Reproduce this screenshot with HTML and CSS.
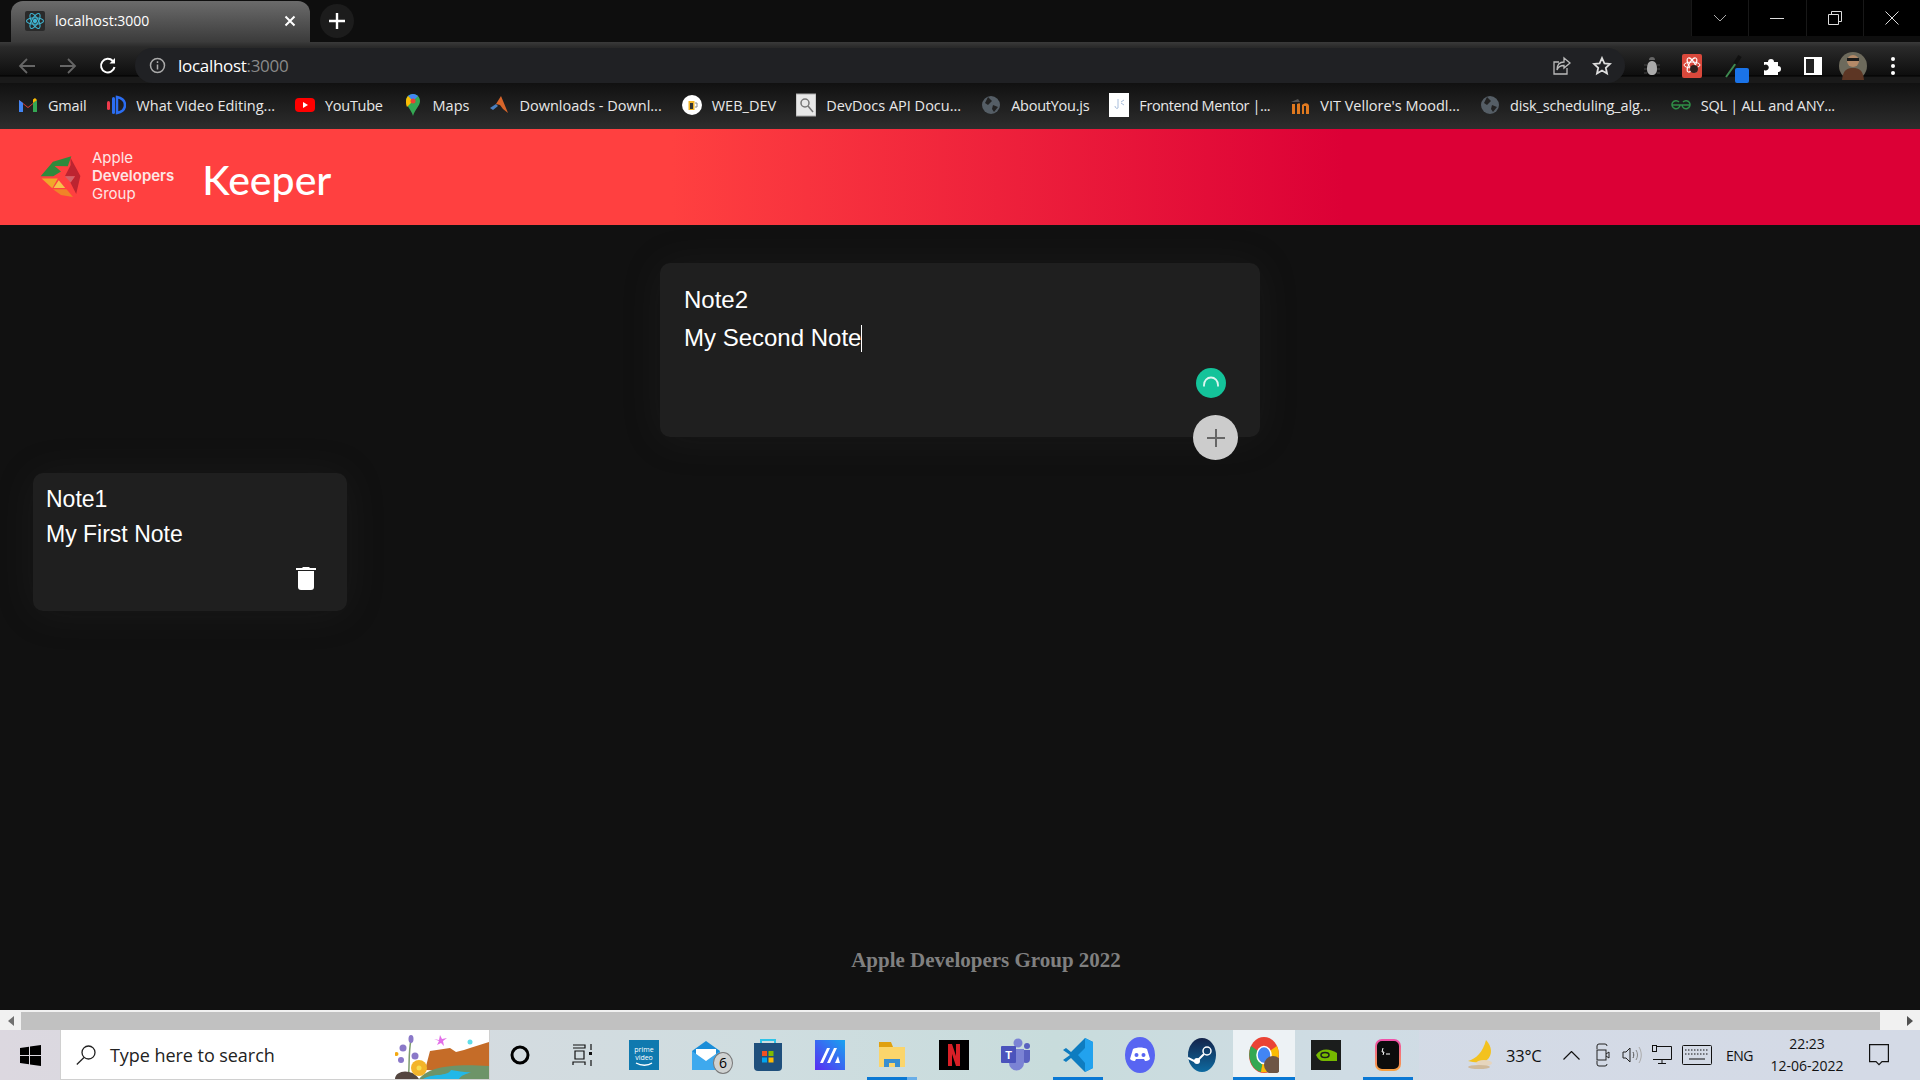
FILE: index.html
```html
<!DOCTYPE html>
<html lang="en">
<head>
<meta charset="utf-8">
<title>localhost:3000</title>
<link rel="stylesheet" href="styles.css">
</head>
<body>
<div class="screen">
  <div class="browser">
    <div class="tabstrip">
      <div class="tab">
        <span class="favicon">
          <svg width="20" height="20" viewBox="0 0 20 20" fill="none" stroke="#3fb6d3" stroke-width="1.1"><ellipse cx="10" cy="10" rx="8.5" ry="3.3"/><ellipse cx="10" cy="10" rx="8.5" ry="3.3" transform="rotate(60 10 10)"/><ellipse cx="10" cy="10" rx="8.5" ry="3.3" transform="rotate(120 10 10)"/><circle cx="10" cy="10" r="1.6" fill="#3fb6d3"/></svg>
        </span>
        <span class="tab-title">localhost:3000</span>
        <svg class="tab-close" width="12" height="12" viewBox="0 0 12 12" stroke="#fff" stroke-width="2"><path d="M1.5 1.5l9 9M10.500 1.500l-9 9"/></svg>
      </div>
      <div class="new-tab"><svg width="16" height="16" viewBox="0 0 16 16" stroke="#fff" stroke-width="2.400"><path d="M8 0v16M0 8h16"/></svg></div>
      <div class="win-controls">
        <span class="win-btn"><svg width="14" height="14" viewBox="0 0 14 14" fill="none" stroke="#aaa"><path d="M1 4l6 6 6-6"/></svg></span>
        <span class="win-btn"><svg width="14" height="14" viewBox="0 0 14 14" stroke="#ddd"><path d="M0 7.500h14"/></svg></span>
        <span class="win-btn"><svg width="14" height="14" viewBox="0 0 14 14" fill="none" stroke="#ddd"><path d="M.5 3.500h10v10H.5zM3.500 3.500V.5h10v10h-3"/></svg></span>
        <span class="win-btn"><svg width="14" height="14" viewBox="0 0 14 14" stroke="#ddd"><path d="M.5.5l13 13M13.500.5l-13 13"/></svg></span>
      </div>
    </div>
    <div class="toolbar">
      <div class="nav">
        <svg width="18" height="18" viewBox="0 0 18 18" fill="none" stroke="#666" stroke-width="1.800"><path d="M17 9H2M9 2L2 9l7 7"/></svg>
        <svg width="18" height="18" viewBox="0 0 18 18" fill="none" stroke="#666" stroke-width="1.800"><path d="M1 9h15M9 2l7 7-7 7"/></svg>
        <svg width="18" height="18" viewBox="0 0 18 18" fill="none" stroke="#fff" stroke-width="2"><path d="M15.500 10a6.800 6.800 0 1 1-1.700-6"/><path d="M16 1v5.500h-5.500" fill="#fff" stroke="none"/></svg>
      </div>
      <div class="omnibox">
        <svg width="17" height="17" viewBox="0 0 17 17" fill="none" stroke="#aaa" stroke-width="1.500"><circle cx="8.500" cy="8.500" r="7"/><path d="M8.500 7.500v5M8.500 4.200v1.800"/></svg>
        <span class="url">localhost<span class="url-port">:3000</span></span>
        <div class="omni-actions">
          <svg width="20" height="20" viewBox="0 0 20 20" fill="none" stroke="#bbb" stroke-width="1.300"><path d="M15 12v6H2V6h5M12 2l6 5-6 5V9.500c-4 0-6 1.500-7 4.500 0-5 2.500-8 7-8z"/></svg>
          <svg width="20" height="20" viewBox="0 0 20 20" fill="none" stroke="#ddd" stroke-width="1.800"><path d="M10 2l2.400 5.300 5.600.6-4.200 3.900 1.200 5.700-5-3-5 3 1.200-5.700L2 7.900l5.600-.6z"/></svg>
        </div>
      </div>
      <div class="extensions">
        <svg class="ext-bug" width="18" height="22" viewBox="0 0 18 22"><path d="M6 5a3 3 0 0 1 6 0z" fill="#666"/><path d="M9 6c4 0 5 4 5 8s-2 6-5 6-5-2-5-6 1-8 5-8z" fill="#aaa"/><path d="M1 10h3M14 10h3M1 14h3M14 14h3M1 18h3M14 18h3" stroke="#444"/></svg>
        <svg class="ext-react" width="20" height="24" viewBox="0 0 20 24"><rect width="20" height="24" rx="2" fill="#d9483b"/><g fill="none" stroke="#fff" stroke-width="1"><ellipse cx="10" cy="11" rx="8" ry="3"/><ellipse cx="10" cy="11" rx="8" ry="3" transform="rotate(60 10 11)"/><ellipse cx="10" cy="11" rx="8" ry="3" transform="rotate(120 10 11)"/></g><circle cx="12" cy="15" r="4" fill="#30201c"/></svg>
        <span class="ext-dropper">
          <svg width="20" height="24" viewBox="0 0 20 24" fill="none"><path d="M2 23L12 9" stroke="#3e8a50" stroke-width="2"/><path d="M11 10l5-8" stroke="#111" stroke-width="4"/></svg>
          <span class="ext-badge"></span>
        </span>
        <svg class="ext-puzzle" width="19" height="19" viewBox="0 0 19 19" fill="#fff"><path d="M1 6h4a3 3 0 1 1 6 0h4v4a3 3 0 1 1 0 6v3H1v-5a3 3 0 1 0 0-5z"/></svg>
        <svg class="ext-side" width="18" height="18" viewBox="0 0 18 18"><path fill="#fff" d="M0 0h18v18H0z"/><path fill="#222" d="M2 2h8v14H2z"/></svg>
        <svg class="ext-avatar" width="28" height="28" viewBox="0 0 28 28"><circle cx="14" cy="14" r="14" fill="#6d6a5c"/><path d="M3 28c1-10 5-12 11-12s10 2 11 12z" fill="#5d3624"/><circle cx="14" cy="9" r="6" fill="#b48a68"/><path d="M8 6h12v3H8z" fill="#1a1a1a"/></svg>
        <svg class="ext-menu" width="6" height="20" viewBox="0 0 6 20" fill="#fff"><circle cx="3" cy="3" r="2"/><circle cx="3" cy="10" r="2"/><circle cx="3" cy="17" r="2"/></svg>
      </div>
    </div>
    <div class="bookmarks">
      <span class="bm bm-s1"><svg width="20" height="16" viewBox="0 0 20 16"><path d="M1 15V3l9 7 9-7v12h-4V7l-5 4-5-4v8z" fill="#ea4335"/><path d="M1 15V3l4 3v9z" fill="#4285f4"/><path d="M19 15V3l-4 3v9z" fill="#34a853"/><path d="M15 6l4-3v0l-2-2-2 1.500z" fill="#fbbc04"/></svg>Gmail</span>
      <span class="bm"><svg width="20" height="20" viewBox="0 0 20 20"><rect x="1" y="6" width="3" height="9" rx="1.500" fill="#ef3b4c"/><rect x="6" y="2" width="3" height="17" rx="1.500" fill="#2b6df2"/><path d="M11 2c5 1 8 4 8 8s-3 7-8 8z" fill="none" stroke="#2b6df2" stroke-width="2.500"/></svg>What Video Editing...</span>
      <span class="bm bm-s2"><svg width="20" height="20" viewBox="0 0 20 20"><rect y="3" width="20" height="14" rx="4" fill="#f00"/><path d="M8 7l5 3-5 3z" fill="#fff"/></svg>YouTube</span>
      <span class="bm"><svg width="20" height="24" viewBox="0 0 20 24"><path d="M10 1c4 0 7 3 7 7 0 5-5 8-7 15-2-7-7-10-7-15 0-4 3-7 7-7z" fill="#34a853"/><path d="M5 3c1-1 3-2 5-2 2 0 3.500 1 5 2l-5 5z" fill="#4285f4"/><path d="M3 8c0-2 1-4 2-5l5 5-6 6c-1-2-1-4-1-6z" fill="#fbbc04"/><circle cx="10" cy="8" r="2.500" fill="#ea4335"/></svg>Maps</span>
      <span class="bm"><svg width="20" height="20" viewBox="0 0 20 20"><path d="M1 13l6-4 2 2-5 4z" fill="#4a80c0"/><path d="M7 9l5-8 7 17-5-4-3-4z" fill="#d8652a"/></svg>Downloads - Downl...</span>
      <span class="bm"><svg width="20" height="20" viewBox="0 0 20 20"><circle cx="10" cy="10" r="10" fill="#fff"/><rect x="6.500" y="6" width="6" height="9" fill="#f0b429"/><rect x="8" y="8" width="3" height="6" fill="#333"/><path d="M13 8h2v4h-2" fill="none" stroke="#888"/></svg>WEB_DEV</span>
      <span class="bm"><svg width="20" height="24" viewBox="0 0 20 24"><rect y="1" width="20" height="22" fill="#e8e8e8" stroke="#aaa"/><circle cx="9" cy="10" r="4" fill="none" stroke="#777" stroke-width="1.500"/><path d="M12 13l5 6" stroke="#777" stroke-width="1.500"/></svg>DevDocs API Docu...</span>
      <span class="bm bm-s3"><svg width="20" height="20" viewBox="0 0 20 20"><circle cx="10" cy="10" r="9" fill="#555e66"/><path d="M7 2l4 4-4 4-3-2zM12 10l5 2-4 5-2-3z" fill="#222"/></svg>AboutYou.js</span>
      <span class="bm bm-s4"><svg width="20" height="24" viewBox="0 0 20 24"><rect width="20" height="24" fill="#fff"/><path d="M9 6v9c-1 1-3 0-3-2" fill="none" stroke="#a8bedc"/><path d="M12 9l3-2M12 10l3 2" stroke="#a8bedc"/></svg>Frontend Mentor |...</span>
      <span class="bm"><svg width="20" height="18" viewBox="0 0 20 18"><path d="M1 6l7-3 2 3z" fill="#555"/><path d="M2 18V8h3v10zM7 18V8c2-1 3-1 3 0v10zM12 18V9c3-3 7-2 7 1v8h-3v-8h-2v8z" fill="#e0791f"/></svg>VIT Vellore's Moodl...</span>
      <span class="bm bm-s5"><svg width="20" height="20" viewBox="0 0 20 20"><circle cx="10" cy="10" r="9" fill="#555e66"/><path d="M7 2l4 4-4 4-3-2zM12 10l5 2-4 5-2-3z" fill="#222"/></svg>disk_scheduling_alg...</span>
      <span class="bm bm-s6"><svg width="20" height="12" viewBox="0 0 20 12" fill="none" stroke="#2f8d46" stroke-width="1.500"><path d="M1 6h18M9 6a4 4 0 1 1-1-3M11 6a4 4 0 1 0 1-3"/></svg>SQL | ALL and ANY...</span>
    </div>
  </div>

  <div class="page">
    <header class="app-header">
      <svg class="logo" width="42" height="44" viewBox="120 85 130 134">
        <path d="M122 150l38-45 57-17-11 31-41-1 20 17-24 15z" fill="#2f8a3c"/>
        <path d="M214 92l31 57-13 56-18-36 15-19h-32l18-35z" fill="#bd2430"/>
        <path d="M197 150h31l-13 19z" fill="#d0636b"/>
        <path d="M125 157h50l-17 30z" fill="#f0a82a"/>
        <path d="M178 162l20 24h-36z" fill="#f6c24b"/>
        <path d="M160 190h42l20 24-37-6z" fill="#f08428"/>
      </svg>
      <div class="org"><span>Apple</span><strong>Developers</strong><span>Group</span></div>
      <h1 class="brand">Keeper</h1>
    </header>

    <main class="content">
      <form class="composer">
        <div class="composer-line">Note2</div>
        <div class="composer-line">My Second Note<span class="caret"></span></div>
        <span class="spinner"><svg width="16" height="16" viewBox="0 0 16 16" fill="none" stroke="#fff" stroke-opacity=".85" stroke-width="1.800"><path d="M1 11.500V10A7 7.500 0 0 1 15 10v1.500"/></svg></span>
        <span class="fab"><svg width="18" height="18" viewBox="0 0 18 18" stroke="#666" stroke-width="2"><path d="M9 0v18M0 9h18"/></svg></span>
      </form>
      <section class="note">
        <div class="note-line">Note1</div>
        <div class="note-line">My First Note</div>
        <svg class="trash" width="20" height="24" viewBox="0 0 20 24" fill="#fff"><path d="M7 1h6l1 1h6v2H0V2h6z"/><path d="M2 5h16v16a3 3 0 0 1-3 3H5a3 3 0 0 1-3-3z"/></svg>
      </section>
      <footer class="footer">Apple Developers Group 2022</footer>
    </main>
  </div>

  <div class="hscroll">
    <span class="sb-btn"><span class="sb-left"></span></span>
    <span class="sb-thumb"></span>
    <span class="sb-rest"></span>
    <span class="sb-btn"><span class="sb-right"></span></span>
  </div>

  <div class="taskbar">
    <div class="start"><svg width="21" height="21" viewBox="0 0 21 21" fill="#000"><path d="M0 3l9-1.300V10H0zM10 1.500L21 0v10H10zM0 11h9v8.300L0 18zM10 11h11v10l-11-1.500z"/></svg></div>
    <div class="search">
      <svg width="20" height="20" viewBox="0 0 20 20" fill="none" stroke="#222" stroke-width="1.300"><circle cx="12.500" cy="7.500" r="6.500"/><path d="M8 12.500L.8 19.500"/></svg>
      <span class="search-text">Type here to search</span>
      <svg class="search-art" width="94" height="49" viewBox="0 0 94 49">
        <path d="M30 40l5-19 20-3 6 4 8-2 6-2 19-6v30z" fill="#c56c28"/>
        <path d="M24 49c8-11 30-16 70-13v13z" fill="#6d9468"/>
        <path d="M28 49c10-6 24-2 28-9 8 1 16 3 20 2-4 2-10 3-12 7z" fill="#22b8e8"/>
        <path d="M13 49c2-10 0-25 3-39" fill="none" stroke="#7c9c6c" stroke-width="1.500"/>
        <ellipse cx="16" cy="9" rx="2.500" ry="4" fill="#8a78c8"/><circle cx="8" cy="18" r="3.500" fill="#8a78c8"/><circle cx="20" cy="26" r="3.500" fill="#8a78c8"/><circle cx="6" cy="30" r="3" fill="#8a78c8"/><circle cx="1.500" cy="24" r="2" fill="#f4a810"/>
        <path d="M0 49c0-6 8-9 14-7 5 1 8 4 10 7z" fill="#544640"/>
        <circle cx="24" cy="38" r="8" fill="#f3b42a"/><circle cx="24" cy="38" r="2.500" fill="#f8dc50"/>
        <path d="M39 9l5 1 1-5 2 4 5-1-4 3 1 5-3-3-4 2 2-4z" fill="#e26ee8"/><circle cx="75" cy="12" r="2.500" fill="#60dde8"/>
      </svg>
    </div>
    <span class="slot slot-cortana"><svg width="20" height="20" viewBox="0 0 20 20" fill="none" stroke="#000" stroke-width="3"><circle cx="10" cy="10" r="8"/></svg></span>
    <span class="slot slot-tasks"><svg width="20" height="22" viewBox="0 0 20 22" fill="none" stroke="#111" stroke-width="1.200"><path d="M1 1h12v3H1M3 7h9v8H3zM1 21v-3h12v3M19 0v6M19 16v6"/><rect x="17" y="8" width="3" height="3" fill="#111" stroke="none"/></svg></span>
    <span class="slot"><svg width="30" height="30" viewBox="0 0 30 30"><rect width="30" height="30" fill="#0f79af"/><text x="15" y="12" class="svg-label">prime</text><text x="15" y="20" class="svg-label">video</text><path d="M7 23c5 3 12 3 16 0" fill="none" stroke="#fff" stroke-width="1.300"/></svg></span>
    <span class="slot"><svg width="30" height="30" viewBox="0 0 30 30"><path d="M1 11L15 1l14 10v19H1z" fill="#1a8dd8"/><path d="M5 9h20v6l-10 7-10-7z" fill="#fff"/><path d="M1 11l14 10 14-10v19H1z" fill="#3ea9ee"/></svg><span class="badge-count">6</span></span>
    <span class="slot"><svg width="30" height="34" viewBox="0 0 30 34"><path d="M8 6V2h14v4" fill="none" stroke="#2dc3e8" stroke-width="2"/><path d="M1 5h28v24a4 4 0 0 1-4 4H5a4 4 0 0 1-4-4z" fill="#1f4f7c"/><rect x="9" y="13" width="5" height="5" fill="#f25022"/><rect x="15.500" y="13" width="5" height="5" fill="#7fba00"/><rect x="9" y="19.500" width="5" height="5" fill="#00a4ef"/><rect x="15.500" y="19.500" width="5" height="5" fill="#ffb900"/></svg></span>
    <span class="slot"><svg width="30" height="30" viewBox="0 0 30 30"><defs><linearGradient id="ms" x1="0" y1="1" x2="1" y2="0"><stop offset="0" stop-color="#5a2cf2"/><stop offset="1" stop-color="#18a4f0"/></linearGradient></defs><rect width="30" height="30" fill="url(#ms)"/><path d="M5 23L12 8h3L8 23zM12 23l7-15h3l-7 15zM20 23l3-7 2 7z" fill="#fff"/></svg></span>
    <span class="slot slot-open"><svg width="28" height="30" viewBox="0 0 28 30"><path d="M1 2h12l2 5H1z" fill="#e0a010"/><path d="M1 7h26v20H1z" fill="#fbd56b"/><path d="M6 19h16v8h-5v-4h-6v4H6z" fill="#3a8fd0"/></svg><span class="tail"></span></span>
    <span class="slot"><svg width="30" height="30" viewBox="0 0 30 30"><rect width="30" height="30" fill="#000"/><path d="M9 4h4l4 12V4h4v22h-4l-4-12v12H9z" fill="#d81f26"/></svg></span>
    <span class="slot"><svg width="30" height="34" viewBox="0 0 30 34"><circle cx="17" cy="5" r="4.500" fill="#7b83d4"/><circle cx="26" cy="8" r="3" fill="#5a62c0"/><path d="M21 12h8v9a4 4 0 0 1-8 0z" fill="#5a62c0"/><path d="M8 11h15v14a7 7 0 0 1-15 0z" fill="#7b83d4"/><rect y="8" width="15" height="17" rx="1" fill="#4b53bc"/><text x="7.500" y="21" class="svg-t">T</text></svg></span>
    <span class="slot slot-open"><svg width="31" height="36" viewBox="0 0 31 36"><path d="M22 1l8 4v26l-8 4L8 21l-5 4-3-2 7-5-7-5 3-2 5 4z" fill="#0e7cc0"/><path d="M22 1l8 4v26l-8 4 0-9-7-8 7-7z" fill="#22a2ee"/></svg></span>
    <span class="slot"><svg width="30" height="36" viewBox="0 0 30 36"><ellipse cx="15" cy="18" rx="15" ry="18" fill="#5865f2"/><path d="M8 12c4-2 10-2 14 0l3 10c-2 2-4 2-5 2l-1-2H11l-1 2c-1 0-3 0-5-2z" fill="#fff"/><circle cx="11.500" cy="18" r="2" fill="#5865f2"/><circle cx="18.500" cy="18" r="2" fill="#5865f2"/></svg></span>
    <span class="slot"><svg width="28" height="34" viewBox="0 0 28 34"><defs><linearGradient id="st" x1="0" y1="0" x2="0" y2="1"><stop offset="0" stop-color="#14234a"/><stop offset="1" stop-color="#0d6aa0"/></linearGradient></defs><ellipse cx="14" cy="17" rx="14" ry="17" fill="url(#st)"/><circle cx="19" cy="13" r="4" fill="none" stroke="#fff" stroke-width="1.500"/><path d="M0 20l8 4 8-8" fill="none" stroke="#fff" stroke-width="2"/><circle cx="9" cy="23" r="3" fill="#fff"/></svg></span>
    <span class="slot slot-active"><svg width="30" height="36" viewBox="0 0 30 36"><ellipse cx="15" cy="18" rx="15" ry="18" fill="#ea4335"/><path d="M15 18L2 9a15 18 0 0 0 10 26z" fill="#34a853"/><path d="M15 18l13-9a15 18 0 0 1-16 26z" fill="#fbbc04"/><ellipse cx="15" cy="18" rx="7" ry="8.500" fill="#4285f4" stroke="#fff" stroke-width="1.500"/><circle cx="24" cy="28" r="9" fill="#6e5545"/></svg></span>
    <span class="slot"><svg width="30" height="30" viewBox="0 0 30 30"><rect width="30" height="30" fill="#1b1d1c"/><path d="M5 15c5-7 13-7 21-2v8H12c-3 0-5-2-7-6z" fill="#76b900"/><ellipse cx="14" cy="15" rx="4" ry="2.500" fill="none" stroke="#1b1d1c" stroke-width="1.500"/></svg></span>
    <span class="slot slot-open"><svg width="26" height="32" viewBox="0 0 26 32"><defs><linearGradient id="tm" x1="0" y1="0" x2="0" y2="1"><stop offset="0" stop-color="#f050a8"/><stop offset="1" stop-color="#f8a040"/></linearGradient></defs><rect x="1" y="1" width="24" height="30" rx="6" fill="#0c0c0c" stroke="url(#tm)" stroke-width="2"/><path d="M8 9l-1 4h2l-1 3" stroke="#fff" fill="none"/><path d="M11 15h4" stroke="#fff"/></svg></span>

    <div class="tray">
      <svg class="tray-moon" width="28" height="32" viewBox="0 0 28 32"><path d="M19 1c6 6 7 15 1 20-4 3-12 3-19 1 8-2 15-9 18-21z" fill="#f3c21f"/><ellipse cx="17" cy="24" rx="8" ry="3" fill="#e6d5bd"/><ellipse cx="12" cy="28" rx="11" ry="2" fill="#d0ba9b"/></svg>
      <span class="tray-temp">33°C</span>
      <svg class="tray-caret" width="17" height="9" viewBox="0 0 17 9" fill="none" stroke="#111" stroke-width="1.200"><path d="M.5 8.500l8-8 8 8"/></svg>
      <svg class="tray-meet" width="14" height="24" viewBox="0 0 14 24" fill="none" stroke="#222"><path d="M1 6V3a2 2 0 0 1 2-2h6a2 2 0 0 1 2 2M1 18v3a2 2 0 0 0 2 2h6a2 2 0 0 0 2-2"/><rect x="1" y="7" width="9" height="10"/><path d="M10 11l3-2v6l-3-2"/></svg>
      <svg class="tray-sound" width="20" height="20" viewBox="0 0 20 20" fill="none" stroke="#222"><path d="M1 7h3l4-4v14l-4-4H1z"/><path d="M11 7c1 2 1 4 0 6" stroke="#555"/><path d="M14 5c2 3 2 7 0 10" stroke="#888"/><path d="M17 2c3 5 3 11 0 16" stroke="#aaa"/></svg>
      <svg class="tray-net" width="20" height="20" viewBox="0 0 20 20" fill="none" stroke="#111"><path d="M4 1.500h15.500v13H1M10 15v3M6 18.500h8"/><rect x=".5" y=".5" width="4" height="6" fill="#d5dbe6"/></svg>
      <svg class="tray-keys" width="30" height="20" viewBox="0 0 30 20" fill="none" stroke="#111"><rect x=".5" y=".5" width="29" height="19" rx="1"/><path d="M3 5h24M3 9h24" stroke-dasharray="1.500 1.500"/><path d="M7 14h16"/></svg>
      <span class="tray-lang">ENG</span>
      <div class="clock"><span>22:23</span><span>12-06-2022</span></div>
      <svg class="tray-note" width="20" height="22" viewBox="0 0 20 22" fill="none" stroke="#111" stroke-width="1.200"><path d="M.6.6h18.800v17H13l-3 3-3-3H.6z"/></svg>
    </div>
  </div>
</div>
</body>
</html>
```

FILE: styles.css
```css
* { box-sizing: border-box; }
html, body { margin: 0; padding: 0; }
body { background: #111; overflow: hidden; }
svg { display: block; flex: none; }

.screen { width: 1920px; height: 1080px; display: flex; flex-direction: column; overflow: hidden; }

/* browser */
.browser { flex: none; font-family: "Open Sans", "Noto Sans", sans-serif; color: #fff; }
.tabstrip { height: 42px; display: flex; align-items: flex-start; padding: 1px 0 0 11px; background: #0e0e0e; position: relative; }
.tab { width: 299px; height: 41px; border-radius: 12px 12px 0 0; background: linear-gradient(#6b6b6b, #3b3b3b); display: flex; align-items: center; padding: 0 14px 2px; }
.favicon { width: 20px; height: 20px; background: #2a2a2a; border-radius: 2px; }
.tab-title { margin-left: 10px; font-size: 14px; flex: 1; }
.new-tab { width: 34px; height: 34px; margin: 3px 0 0 10px; border-radius: 50%; background: #1c1c1c; display: flex; align-items: center; justify-content: center; }
.win-controls { position: absolute; top: 0; right: 0; height: 36px; width: 229px; background: #000; display: flex; }
.win-btn { flex: 1; display: flex; align-items: center; justify-content: center; border-left: 1px solid #181818; }

.toolbar { height: 41px; display: flex; background: linear-gradient(#3a3a3a 0, #2a2a2a 5px, #0e0e0e 33px, #000 34px, #1a1a1a 35px, #1a1a1a 41px); position: relative; padding-top: 6px; }
.nav { width: 135px; display: flex; align-items: center; gap: 22.500px; padding: 0 0 0 18px; height: 35px; }
.omnibox { width: 1490px; height: 35px; border-radius: 18px; background: #202124; display: flex; align-items: center; padding-left: 14px; }
.url { margin-left: 12px; font-size: 17px; letter-spacing: -.3px; }
.url-port { color: #8a8a8a; }
.omni-actions { margin-left: auto; display: flex; align-items: center; gap: 20px; padding-right: 13px; }
.extensions { flex: 1; position: relative; display: flex; align-items: center; height: 35px; padding-left: 18px; }
.ext-react { margin-left: 21px; }
.ext-dropper { position: relative; margin-left: 22px; width: 20px; height: 24px; }
.ext-badge { position: absolute; left: 11px; top: 14px; width: 14px; height: 15px; border-radius: 2px; background: #1a73e8; }
.ext-puzzle { margin-left: 19px; }
.ext-side { margin-left: 22px; }
.ext-avatar { margin-left: 17px; }
.ext-menu { margin-left: 23px; }

.bookmarks { height: 46px; display: flex; align-items: center; padding: 0 0 2px 18px; gap: 20px; background: linear-gradient(#111, #2d2d2d); font-size: 14.500px; color: #e8e8e8; white-space: nowrap; }
.bm { display: flex; align-items: center; gap: 0; }
.bm svg { margin-right: 10px; }
.bm-s1 { letter-spacing: -.2px; }
.bm-s2 { letter-spacing: -.3px; }
.bm-s3 { letter-spacing: -.25px; }
.bm-s4 { letter-spacing: -.4px; }
.bm-s5 { letter-spacing: -.12px; }
.bm-s6 { letter-spacing: -.28px; }

/* app */
.page { flex: 1; min-height: 0; display: flex; flex-direction: column; background: #111; font-family: "Liberation Sans", Arial, sans-serif; color: #fff; }
.app-header { height: 96px; flex: none; display: flex; align-items: center; padding-left: 40px; background: linear-gradient(90deg, #ff4040 0, #ff4040 35%, #dc0036 70%, #dc0036 100%); }
.org { margin: -2px 0 0 10px; display: flex; flex-direction: column; font-family: Inter, sans-serif; font-size: 15px; line-height: 18px; color: #fde6e6; }
.org strong { font-weight: 600; }
.brand { margin: 5px 0 0 28px; font-family: Lato, sans-serif; font-weight: 500; font-size: 41px; line-height: 1; color: #fff; }

.content { flex: 1; display: flex; flex-direction: column; padding-top: 38px; }
.composer { position: relative; width: 600px; height: 174px; margin: 0 auto; padding: 18px 24px 0; border-radius: 10px; background: #1f1f1f; box-shadow: 0 2px 40px rgba(70, 70, 70, .14); }
.composer-line { font-size: 24px; line-height: 38px; }
.caret { display: inline-block; width: 1px; height: 27px; background: #fff; vertical-align: -6px; }
.spinner { position: absolute; right: 34px; top: 105px; width: 30px; height: 30px; border-radius: 50%; background: #14c39a; display: flex; align-items: center; justify-content: center; }
.fab { position: absolute; right: 22px; bottom: -23px; width: 45px; height: 45px; border-radius: 50%; background: #ccc; display: flex; align-items: center; justify-content: center; }

.note { width: 314px; height: 138px; margin: 36px 0 0 33px; padding: 9px 0 0 13px; border-radius: 10px; background: #1f1f1f; box-shadow: 0 2px 40px rgba(70, 70, 70, .14); display: flex; flex-direction: column; }
.note-line { font-size: 23px; line-height: 35px; }
.trash { align-self: flex-end; margin: 14px 31px 0 0; }

.footer { margin-top: auto; padding: 0 0 38px 52px; text-align: center; font-family: "Liberation Serif", "Times New Roman", serif; font-weight: 700; font-size: 21px; line-height: 24px; color: #808080; }

/* scrollbar */
.hscroll { height: 20px; flex: none; display: flex; background: #f1f1f1; padding-top: 2px; }
.sb-btn { width: 21px; display: flex; align-items: center; justify-content: center; }
.sb-left { border: 5px solid transparent; border-left: 0; border-right: 6px solid #707070; }
.sb-right { border: 5px solid transparent; border-right: 0; border-left: 6px solid #505050; }
.sb-thumb { width: 1859px; background: #c1c1c1; }
.sb-rest { flex: 1; }

/* taskbar */
.taskbar { height: 50px; flex: none; display: flex; align-items: stretch; background: linear-gradient(90deg, #dcd8e0 0, #cfdde0 40%, #c8dcdc 55%, #cfdce4 70%, #d4dae6 100%); font-family: "Open Sans", "Noto Sans", sans-serif; color: #111; }
.start { width: 60px; display: flex; align-items: center; justify-content: center; }
.search { width: 430px; background: #fff; border: 1px solid #d0d0d0; border-top: 0; display: flex; align-items: center; padding-left: 15px; position: relative; }
.search-text { margin-left: 14px; font-size: 18px; letter-spacing: -.05px; color: #222; }
.search-art { position: absolute; right: 0; bottom: 0; }
.slot { width: 62px; flex: none; display: flex; align-items: center; justify-content: center; position: relative; }
.slot-cortana { width: 60px; }
.slot-tasks { width: 63px; }
.slot-open::after, .slot-active::after { content: ""; position: absolute; left: 6px; right: 6px; bottom: 0; height: 3px; background: #0a78d4; }
.slot-active { background: #edf2f5; }
.slot-active::after { left: 0; right: 0; }
.tail { position: absolute; right: 6px; bottom: 0; width: 10px; height: 3px; background: #6aaee8; z-index: 1; }
.badge-count { position: absolute; left: 38px; top: 22px; width: 20px; height: 22px; border-radius: 50%; background: #cfd2d2; border: 1px solid #777; font-size: 14px; line-height: 20px; text-align: center; color: #000; }
.svg-label { font-family: "Open Sans", sans-serif; font-size: 7px; fill: #fff; text-anchor: middle; }
.svg-t { font-family: "Liberation Sans", sans-serif; font-weight: 700; font-size: 11px; fill: #fff; text-anchor: middle; }

.tray { flex: 1; display: flex; align-items: center; padding-left: 48px; font-size: 15px; background: linear-gradient(90deg, rgba(212, 218, 230, .8), #d4dae6); }
.tray-temp { margin-left: 11px; width: 37px; font-size: 16.500px; letter-spacing: -.2px; }
.tray-caret { margin-left: 20px; }
.tray-meet { margin-left: 16px; }
.tray-sound { margin-left: 12px; }
.tray-net { margin-left: 10px; }
.tray-keys { margin-left: 10px; }
.tray-lang { margin-left: 14px; width: 29px; font-size: 14px; letter-spacing: -.5px; }
.clock { margin-left: 14px; width: 76px; display: flex; flex-direction: column; align-items: center; gap: 4px; font-size: 14px; line-height: 18px; letter-spacing: 0; white-space: nowrap; }
.tray-note { margin-left: 24px; }
```
